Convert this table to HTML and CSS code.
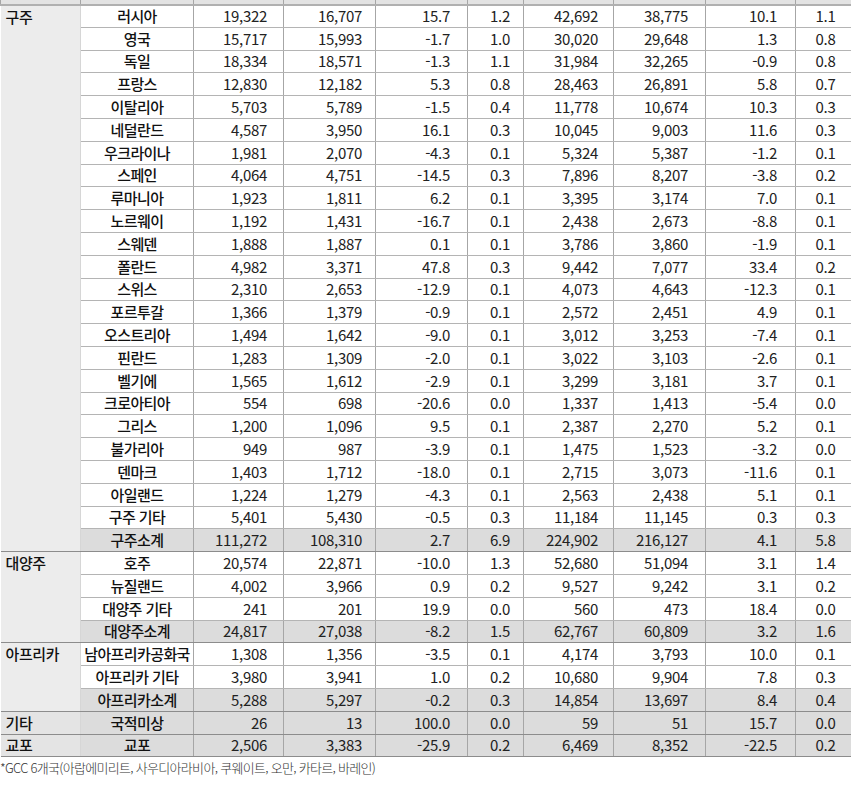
FILE: index.html
```html
<!DOCTYPE html>
<html lang="ko">
<head>
<meta charset="utf-8">
<link rel="stylesheet" href="styles.css">
</head>
<body>
<div class="wrap">
<table class="stats">
<colgroup>
<col class="c1"><col class="c2"><col class="cn"><col class="cn2"><col class="cn2"><col class="cs"><col class="cn"><col class="cn2"><col class="cn"><col class="cs">
</colgroup>
<tr class="head"><td></td><td></td><td></td><td></td><td></td><td></td><td></td><td></td><td></td><td></td></tr>
<tr><td class="grp" rowspan="24">구주</td><td class="nm">러시아</td><td>19,322</td><td>16,707</td><td>15.7</td><td>1.2</td><td>42,692</td><td>38,775</td><td>10.1</td><td>1.1</td></tr>
<tr><td class="nm">영국</td><td>15,717</td><td>15,993</td><td>-1.7</td><td>1.0</td><td>30,020</td><td>29,648</td><td>1.3</td><td>0.8</td></tr>
<tr><td class="nm">독일</td><td>18,334</td><td>18,571</td><td>-1.3</td><td>1.1</td><td>31,984</td><td>32,265</td><td>-0.9</td><td>0.8</td></tr>
<tr><td class="nm">프랑스</td><td>12,830</td><td>12,182</td><td>5.3</td><td>0.8</td><td>28,463</td><td>26,891</td><td>5.8</td><td>0.7</td></tr>
<tr><td class="nm">이탈리아</td><td>5,703</td><td>5,789</td><td>-1.5</td><td>0.4</td><td>11,778</td><td>10,674</td><td>10.3</td><td>0.3</td></tr>
<tr><td class="nm">네덜란드</td><td>4,587</td><td>3,950</td><td>16.1</td><td>0.3</td><td>10,045</td><td>9,003</td><td>11.6</td><td>0.3</td></tr>
<tr><td class="nm">우크라이나</td><td>1,981</td><td>2,070</td><td>-4.3</td><td>0.1</td><td>5,324</td><td>5,387</td><td>-1.2</td><td>0.1</td></tr>
<tr><td class="nm">스페인</td><td>4,064</td><td>4,751</td><td>-14.5</td><td>0.3</td><td>7,896</td><td>8,207</td><td>-3.8</td><td>0.2</td></tr>
<tr><td class="nm">루마니아</td><td>1,923</td><td>1,811</td><td>6.2</td><td>0.1</td><td>3,395</td><td>3,174</td><td>7.0</td><td>0.1</td></tr>
<tr><td class="nm">노르웨이</td><td>1,192</td><td>1,431</td><td>-16.7</td><td>0.1</td><td>2,438</td><td>2,673</td><td>-8.8</td><td>0.1</td></tr>
<tr><td class="nm">스웨덴</td><td>1,888</td><td>1,887</td><td>0.1</td><td>0.1</td><td>3,786</td><td>3,860</td><td>-1.9</td><td>0.1</td></tr>
<tr><td class="nm">폴란드</td><td>4,982</td><td>3,371</td><td>47.8</td><td>0.3</td><td>9,442</td><td>7,077</td><td>33.4</td><td>0.2</td></tr>
<tr><td class="nm">스위스</td><td>2,310</td><td>2,653</td><td>-12.9</td><td>0.1</td><td>4,073</td><td>4,643</td><td>-12.3</td><td>0.1</td></tr>
<tr><td class="nm">포르투갈</td><td>1,366</td><td>1,379</td><td>-0.9</td><td>0.1</td><td>2,572</td><td>2,451</td><td>4.9</td><td>0.1</td></tr>
<tr><td class="nm">오스트리아</td><td>1,494</td><td>1,642</td><td>-9.0</td><td>0.1</td><td>3,012</td><td>3,253</td><td>-7.4</td><td>0.1</td></tr>
<tr><td class="nm">핀란드</td><td>1,283</td><td>1,309</td><td>-2.0</td><td>0.1</td><td>3,022</td><td>3,103</td><td>-2.6</td><td>0.1</td></tr>
<tr><td class="nm">벨기에</td><td>1,565</td><td>1,612</td><td>-2.9</td><td>0.1</td><td>3,299</td><td>3,181</td><td>3.7</td><td>0.1</td></tr>
<tr><td class="nm">크로아티아</td><td>554</td><td>698</td><td>-20.6</td><td>0.0</td><td>1,337</td><td>1,413</td><td>-5.4</td><td>0.0</td></tr>
<tr><td class="nm">그리스</td><td>1,200</td><td>1,096</td><td>9.5</td><td>0.1</td><td>2,387</td><td>2,270</td><td>5.2</td><td>0.1</td></tr>
<tr><td class="nm">불가리아</td><td>949</td><td>987</td><td>-3.9</td><td>0.1</td><td>1,475</td><td>1,523</td><td>-3.2</td><td>0.0</td></tr>
<tr><td class="nm">덴마크</td><td>1,403</td><td>1,712</td><td>-18.0</td><td>0.1</td><td>2,715</td><td>3,073</td><td>-11.6</td><td>0.1</td></tr>
<tr><td class="nm">아일랜드</td><td>1,224</td><td>1,279</td><td>-4.3</td><td>0.1</td><td>2,563</td><td>2,438</td><td>5.1</td><td>0.1</td></tr>
<tr><td class="nm">구주 기타</td><td>5,401</td><td>5,430</td><td>-0.5</td><td>0.3</td><td>11,184</td><td>11,145</td><td>0.3</td><td>0.3</td></tr>
<tr class="sub end"><td class="nm">구주소계</td><td>111,272</td><td>108,310</td><td>2.7</td><td>6.9</td><td>224,902</td><td>216,127</td><td>4.1</td><td>5.8</td></tr>
<tr><td class="grp" rowspan="4">대양주</td><td class="nm">호주</td><td>20,574</td><td>22,871</td><td>-10.0</td><td>1.3</td><td>52,680</td><td>51,094</td><td>3.1</td><td>1.4</td></tr>
<tr><td class="nm">뉴질랜드</td><td>4,002</td><td>3,966</td><td>0.9</td><td>0.2</td><td>9,527</td><td>9,242</td><td>3.1</td><td>0.2</td></tr>
<tr><td class="nm">대양주 기타</td><td>241</td><td>201</td><td>19.9</td><td>0.0</td><td>560</td><td>473</td><td>18.4</td><td>0.0</td></tr>
<tr class="sub end"><td class="nm">대양주소계</td><td>24,817</td><td>27,038</td><td>-8.2</td><td>1.5</td><td>62,767</td><td>60,809</td><td>3.2</td><td>1.6</td></tr>
<tr><td class="grp" rowspan="3">아프리카</td><td class="nm">남아프리카공화국</td><td>1,308</td><td>1,356</td><td>-3.5</td><td>0.1</td><td>4,174</td><td>3,793</td><td>10.0</td><td>0.1</td></tr>
<tr><td class="nm">아프리카 기타</td><td>3,980</td><td>3,941</td><td>1.0</td><td>0.2</td><td>10,680</td><td>9,904</td><td>7.8</td><td>0.3</td></tr>
<tr class="sub end"><td class="nm">아프리카소계</td><td>5,288</td><td>5,297</td><td>-0.2</td><td>0.3</td><td>14,854</td><td>13,697</td><td>8.4</td><td>0.4</td></tr>
<tr class="sub end"><td class="grp">기타</td><td class="nm">국적미상</td><td>26</td><td>13</td><td>100.0</td><td>0.0</td><td>59</td><td>51</td><td>15.7</td><td>0.0</td></tr>
<tr class="sub end"><td class="grp">교포</td><td class="nm">교포</td><td>2,506</td><td>3,383</td><td>-25.9</td><td>0.2</td><td>6,469</td><td>8,352</td><td>-22.5</td><td>0.2</td></tr>
</table>
</div>
<p class="note">*GCC 6개국(아랍에미리트, 사우디아라비아, 쿠웨이트, 오만, 카타르, 바레인)</p>
</body>
</html>
```
FILE: styles.css
```css
html, body {
  margin: 0;
  padding: 0;
  background: #ffffff;
}

body {
  font-family: "Noto Sans CJK KR", "Noto Sans", sans-serif;
  color: #1a1a1a;
}

.wrap {
  width: 851px;
  overflow: hidden;
}

.stats {
  width: 851px;
  border-collapse: collapse;
  table-layout: fixed;
  margin-top: -20px;
  font-size: 15px;
  line-height: 18px;
}

.c1 { width: 80px; }
.c2 { width: 113px; }
.cn { width: 90px; }
.cn2 { width: 92px; }
.cs { width: 56px; }

.stats td {
  height: 22.8px;
  padding: 0;
  box-sizing: border-box;
  border: 1px solid #a6a6a6;
  border-top-color: #b4b4b4;
  border-bottom-color: #b4b4b4;
  text-align: right;
  vertical-align: middle;
  white-space: nowrap;
  color: #222;
  letter-spacing: -0.3px;
}

.stats tr.head td {
  height: 24px;
  background: #e3e3e3;
  border-bottom: 2px solid #b0b0b0;
}

.stats td:nth-last-child(8) { padding-right: 16px; }
.stats td:nth-last-child(7) { padding-right: 13px; }
.stats td:nth-last-child(6) { padding-right: 17px; }
.stats td:nth-last-child(5) { padding-right: 13px; }
.stats td:nth-last-child(4) { padding-right: 15px; }
.stats td:nth-last-child(3) { padding-right: 17px; }
.stats td:nth-last-child(2) { padding-right: 18px; }
.stats td:nth-last-child(1) { padding-right: 16px; }

.stats td.nm {
  text-align: center;
  font-weight: 500;
  color: #111;
  padding: 0 2px;
  letter-spacing: -0.6px;
}

.stats td.grp {
  background: #ececec;
  text-align: left;
  vertical-align: top;
  padding: 2px 0 0 5px;
  font-weight: 500;
  color: #111;
  border-left: none;
  border-right-color: #d6d6d6;
  border-bottom: 1px solid #8c8c8c;
  letter-spacing: -0.4px;
}

.stats tr.sub td {
  background: #dcdcdc;
}

.stats tr.sub td.grp {
  background: #e4e4e4;
  vertical-align: middle;
  padding-top: 0;
}

.stats tr.end td {
  border-bottom: 1px solid #8c8c8c;
}

.stats td:last-child {
  border-right: none;
}

.note {
  margin: 2px 0 0 0;
  font-size: 13px;
  line-height: 18px;
  font-weight: 300;
  color: #333;
  letter-spacing: -0.7px;
}
```
